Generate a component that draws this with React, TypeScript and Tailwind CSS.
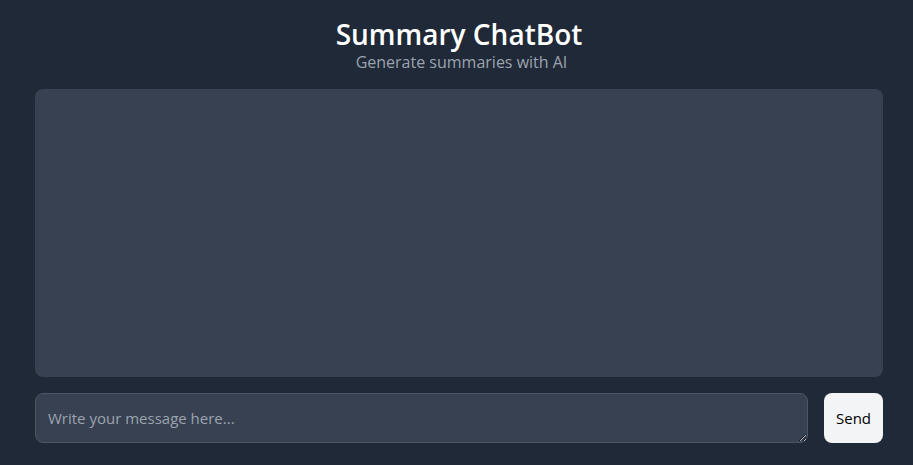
import React from "react";

export default function App() {
  return (
    <div
      className="w-full h-[465px] bg-[#1f2937] flex flex-col pl-[35px] pr-[30px] overflow-hidden"
      style={{ fontFamily: '"Open Sans", "Noto Sans", sans-serif' }}
    >
      <header className="flex flex-col items-center pt-[16px]">
        <h1 className="text-[28px] leading-[36px] font-semibold text-white">Summary ChatBot</h1>
        <p className="text-[16px] leading-[20px] text-[#9ca3af] pl-[5px]">Generate summaries with AI</p>
      </header>
      <div className="mt-[17px] h-[288px] bg-[#374151] rounded-lg" />
      <div className="mt-[16px] flex gap-4">
        <textarea
          placeholder="Write your message here..."
          className="flex-1 h-[50px] bg-[#374151] border border-[#4b5563] rounded-lg px-3 py-[13px] text-[15px] leading-[22px] text-white placeholder:text-[#9ca3af] outline-none"
          style={{ fontFamily: '"Open Sans", "Noto Sans", sans-serif' }}
        />
        <button className="w-[59px] h-[50px] bg-[#f3f4f6] rounded-lg text-[15px] text-black">
          Send
        </button>
      </div>
    </div>
  );
}
